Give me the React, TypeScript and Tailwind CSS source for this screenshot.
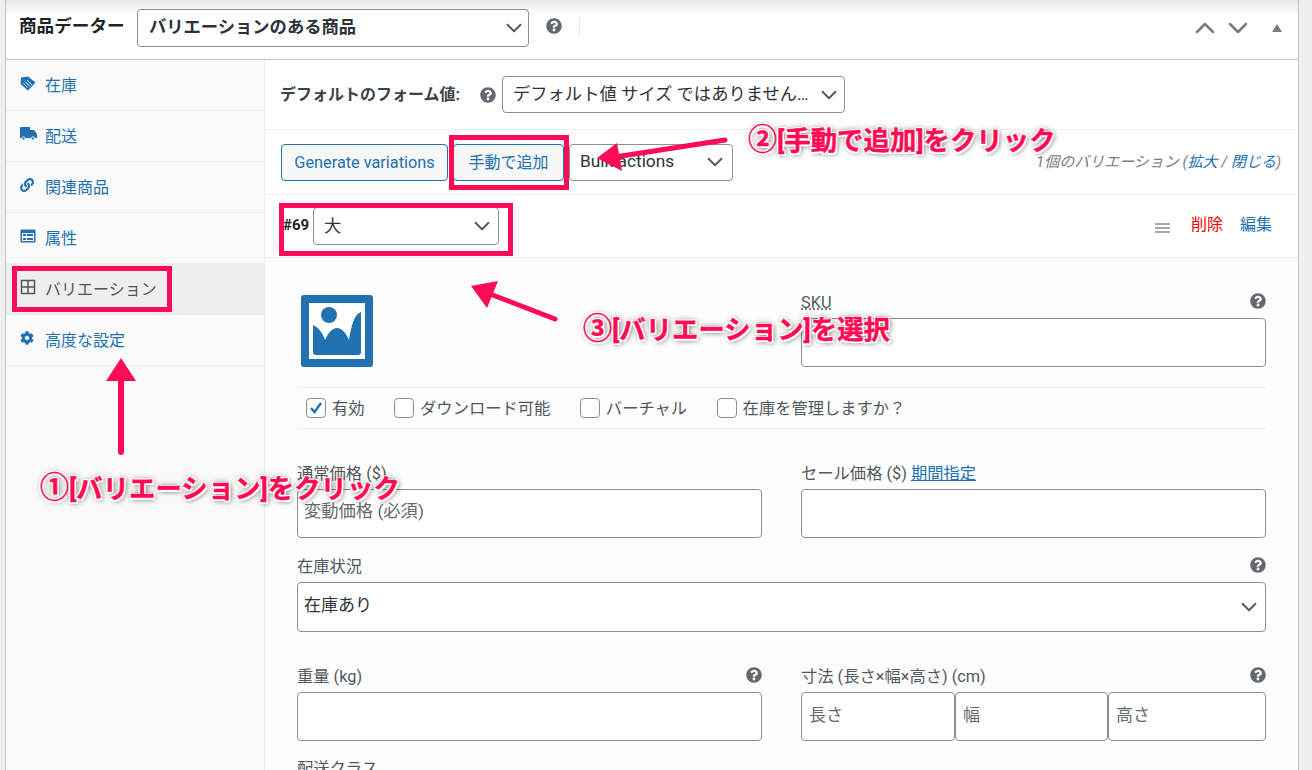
import { FaCog, FaLink, FaQuestionCircle } from "react-icons/fa";
import { LuChevronDown, LuChevronUp } from "react-icons/lu";

const sans = "font-['Roboto','Noto_Sans_CJK_JP',sans-serif]";
const field = "border border-[#8c8f94] rounded-[4px] bg-white";
const redBox = "absolute border-[5px] border-[#ff0a54] pointer-events-none";
const note =
  "absolute whitespace-nowrap font-bold text-[26.4px] leading-[30px] text-[#ff0a54] [-webkit-text-stroke:0.4px_#ff0a54] [text-shadow:-1.5px_-1.5px_0_#fff,1.5px_-1.5px_0_#fff,-1.5px_1.5px_0_#fff,1.5px_1.5px_0_#fff,0_0_6px_#00000088,2px_2px_5px_#00000066]";

function TagIcon() {
  return (
    <svg width="16" height="15" viewBox="0 0 16 15">
      <path d="M8 0.5 15.5 6.5 8 14.5 0.5 8 1 1.5z" fill="#2271b1" />
      <path d="M5 5.5l5 5M7 4l5 5M3.5 7.5l4 4" stroke="#fff" strokeWidth="1" />
    </svg>
  );
}

function TruckIcon() {
  return (
    <svg width="17" height="14" viewBox="0 0 17 14">
      <path d="M0 1a1 1 0 0 1 1-1h9v3h4l3 4v4H0z" fill="#2271b1" />
      <circle cx="3.5" cy="11.5" r="1.6" fill="#2271b1" stroke="#fafafa" />
      <circle cx="13" cy="11.5" r="1.6" fill="#2271b1" stroke="#fafafa" />
    </svg>
  );
}

function AttrIcon() {
  return (
    <svg width="16" height="14" viewBox="0 0 16 14">
      <rect x="0.5" y="0.5" width="15" height="13" rx="1" fill="#2271b1" />
      <rect x="2" y="4" width="12" height="8" fill="#fff" />
      <rect x="3" y="5" width="3" height="2" fill="#2271b1" />
      <rect x="3" y="9" width="3" height="2" fill="#2271b1" />
      <rect x="7" y="5" width="6" height="2" fill="#2271b1" />
      <rect x="7" y="9" width="6" height="2" fill="#2271b1" />
    </svg>
  );
}

function GridIcon() {
  return (
    <svg width="16" height="16" viewBox="0 0 16 16" fill="none" stroke="#50575e" strokeWidth="1.5">
      <rect x="1.5" y="1.5" width="13" height="13" />
      <path d="M8 1.5v13M1.5 8h13" />
    </svg>
  );
}

function SideRow({ icon, label, active }: { icon: React.ReactNode; label: string; active?: boolean }) {
  return (
    <div
      className={`flex items-center h-[51px] border-b border-[#eeeeee] pl-[14px] text-[16px] ${
        active ? "bg-[#eeeeee] text-[#555555]" : "text-[#2271b1]"
      }`}
    >
      <span className="w-[25px] -mt-1 flex shrink-0">{icon}</span>
      <span className="mt-[2px]">{label}</span>
    </div>
  );
}

function Help() {
  return <FaQuestionCircle size={16} className="text-[#646970]" />;
}

function Chevron() {
  return <LuChevronDown size={26} strokeWidth={1.7} className="text-[#50575e] shrink-0" />;
}

function Check({ label, checked }: { label: string; checked?: boolean }) {
  return (
    <div className="flex items-center gap-[6px] text-[16.3px] text-[#50575e]">
      <span className={`${field} w-[20px] h-[20px] flex items-center justify-center`}>
        {checked && (
          <svg width="16" height="16" viewBox="0 0 16 16">
            <path d="M3 8l3.5 4L13 3" fill="none" stroke="#2271b1" strokeWidth="2.4" />
          </svg>
        )}
      </span>
      <span className="mt-[2px]">{label}</span>
    </div>
  );
}

export default function App() {
  return (
    <div className={`${sans} relative w-[1312px] h-[770px] overflow-hidden bg-[#f0f0f1]`}>
      {/* Panel */}
      <div className="ml-[5px] w-[1294px] h-[770px] bg-white border-x border-[#c3c4c7] flex flex-col">
        {/* Header */}
        <div className="h-[60px] shrink-0 border-b border-[#c3c4c7] flex items-start pl-[13px] pr-[14px] pt-[9px] bg-gradient-to-b from-[#e8e8ea] via-white via-[25%] to-white">
          <span className="text-[17.6px] font-bold text-[#1d2327] w-[118px] leading-[34px] whitespace-nowrap">商品データー</span>
          <div className={`${field} w-[392px] h-[38px] flex items-center justify-between pl-[11px] pr-[1px] text-[17.3px] font-bold text-[#2c3338]`}>
            バリエーションのある商品
            <Chevron />
          </div>
          <span className="ml-[17px] mt-[9px]">
            <Help />
          </span>
          <span className="ml-[17px] mt-[9px] w-px h-[18px] bg-[#e2e4e7]" />
          <div className="ml-auto mt-[3px] flex items-center text-[#787c82]">
            <LuChevronUp size={32} strokeWidth={1.9} />
            <LuChevronDown size={32} strokeWidth={1.9} className="ml-[1px]" />
            <span className="ml-[18px] mr-[2px] w-0 h-0 border-x-[5px] border-x-transparent border-b-[8px] border-b-[#787c82]" />
          </div>
        </div>

        <div className="flex-1 flex min-h-0">
          {/* Sidebar */}
          <div className="w-[259px] shrink-0 bg-[#fafafa] border-r border-[#eeeeee]">
            <SideRow icon={<TagIcon />} label="在庫" />
            <SideRow icon={<TruckIcon />} label="配送" />
            <SideRow icon={<FaLink size={14} className="text-[#2271b1]" />} label="関連商品" />
            <SideRow icon={<AttrIcon />} label="属性" />
            <SideRow icon={<GridIcon />} label="バリエーション" active />
            <SideRow icon={<FaCog size={14} className="text-[#2271b1]" />} label="高度な設定" />
          </div>

          {/* Main */}
          <div className="flex-1 min-w-0 bg-[#fdfdfd]">
            <div className="h-[70px] border-b border-[#eeeeee] flex items-center pl-[15px] bg-white">
              <span className="text-[16px] font-bold text-[#3c434a] w-[200px] whitespace-nowrap">デフォルトのフォーム値:</span>
              <Help />
              <div className={`${field} ml-[6px] w-[343px] h-[37px] flex items-center justify-between pl-[10px] pr-[2px] text-[17.3px] text-[#2c3338]`}>
                <span className="whitespace-nowrap">デフォルト値 サイズ ではありません…</span>
                <Chevron />
              </div>
            </div>

            <div className="h-[65px] border-b border-[#eeeeee] flex items-center pl-[16px] pr-[17px] bg-white">
              <div className="h-[37px] w-[167px] pt-[2px] rounded-[4px] border border-[#2271b1] bg-[#f6f7f7] text-[#2271b1] text-[16.3px] flex items-center justify-center">
                Generate variations
              </div>
              <div className="ml-[5px] h-[37px] w-[111px] pt-[2px] rounded-[4px] border border-[#2271b1] bg-[#f6f7f7] text-[#2271b1] text-[16px] flex items-center justify-center">
                手動で追加
              </div>
              <div className={`${field} ml-[5px] w-[164px] h-[37px] flex items-center justify-between pl-[10px] pr-[4px] text-[17.3px] text-[#2c3338]`}>
                Bulk actions
                <Chevron />
              </div>
              <span className="ml-auto text-[15px] italic text-[#787c82] whitespace-nowrap">
                1個のバリエーション (<span className="text-[#2271b1]">拡大</span> / <span className="text-[#2271b1]">閉じる</span>)
              </span>
            </div>

            <div className="h-[63px] border-b border-[#eeeeee] flex items-start pl-[18px] pr-[26px] pt-[12px] bg-white">
              <span className="text-[15px] font-bold text-[#1d2327] w-[30px] mt-[7px]">#69</span>
              <div className={`${field} w-[186px] h-[38px] flex items-center justify-between pl-[10px] pr-[3px] text-[17.3px] text-[#2c3338]`}>
                <span className="mt-[2px]">大</span>
                <Chevron />
              </div>
              <div className="ml-auto flex items-center mt-[6px] text-[16px]">
                <span className="flex flex-col gap-[2px] w-[15px] mt-[6px]">
                  <span className="h-[2px] bg-[#a7aaad]" />
                  <span className="h-[2px] bg-[#a7aaad]" />
                  <span className="h-[2px] bg-[#a7aaad]" />
                </span>
                <span className="ml-[21px] text-[#ff0000]">削除</span>
                <span className="ml-[17px] text-[#2271b1]">編集</span>
              </div>
            </div>

            <div className="pl-[32px] w-[1001px] text-[16.3px] text-[#50575e]">
              <div className="grid grid-cols-2 gap-x-[39px] pt-[37px] h-[129px]">
                <div className="pl-[4px]">
                  <svg width="72" height="72" viewBox="0 0 72 72">
                    <rect width="72" height="72" rx="3" fill="#2271b1" />
                    <rect x="8" y="8" width="56" height="56" fill="#fff" />
                    <circle cx="28" cy="20" r="8" fill="#2271b1" />
                    <path d="M12 30C17 32 22 38 24 45C27 38 31 33 36 33C41 33 45 38 48 45C50 32 53 19 60 17V57a3 3 0 0 1-3 3H15a3 3 0 0 1-3-3Z" fill="#2271b1" />
                  </svg>
                </div>
                <div>
                  <div className="flex justify-between items-start h-[23px]">
                    <span className="mt-[-4px] underline decoration-dotted decoration-[#50575e]">SKU</span>
                    <span className="mt-[-2px]">
                      <Help />
                    </span>
                  </div>
                  <div className={`${field} h-[49px]`} />
                </div>
              </div>

              <div className="h-[42px] border-y border-[#eeeeee] flex items-center pl-[9px] gap-[29.5px]">
                <Check label="有効" checked />
                <Check label="ダウンロード可能" />
                <Check label="バーチャル" />
                <Check label="在庫を管理しますか？" />
              </div>

              <div className="grid grid-cols-2 gap-x-[39px] pt-[33px]">
                <div>
                  <div className="h-[27px] leading-[24px]">通常価格 ($)</div>
                  <div className={`${field} h-[49px] flex items-center pl-[6px] pb-[4px] text-[17.3px] text-[#646970]`}>変動価格 (必須)</div>
                </div>
                <div>
                  <div className="h-[27px] leading-[24px]">
                    セール価格 ($) <span className="text-[#2271b1] underline">期間指定</span>
                  </div>
                  <div className={`${field} h-[49px]`} />
                </div>
              </div>

              <div className="flex justify-between h-[33px] items-end pb-[3px] mt-[11px]">
                <span>在庫状況</span>
                <span className="mb-[6px]">
                  <Help />
                </span>
              </div>
              <div className={`${field} h-[50px] flex items-center justify-between pl-[6px] pr-[3px] pb-[2px] text-[17px] text-[#2c3338]`}>
                在庫あり
                <span className="mt-[2px]">
                  <Chevron />
                </span>
              </div>

              <div className="grid grid-cols-2 gap-x-[39px] pt-[32px]">
                <div>
                  <div className="flex justify-between h-[28px] pt-[1px]">
                    <span>重量 (kg)</span>
                    <span className="mt-[2px]">
                      <Help />
                    </span>
                  </div>
                  <div className={`${field} h-[49px]`} />
                </div>
                <div>
                  <div className="flex justify-between h-[28px] pt-[1px]">
                    <span>寸法 (長さ×幅×高さ) (cm)</span>
                    <span className="mt-[2px]">
                      <Help />
                    </span>
                  </div>
                  <div className="flex h-[49px] text-[17px] text-[#646970]">
                    <div className={`${field} w-[154px] pl-[7px] pt-[10px]`}>長さ</div>
                    <div className={`${field} w-[153px] pl-[7px] pt-[10px]`}>幅</div>
                    <div className={`${field} flex-1 pl-[7px] pt-[10px]`}>高さ</div>
                  </div>
                </div>
              </div>
              <div className="mt-[16px]">配送クラス</div>
            </div>
          </div>
        </div>
      </div>

      {/* Annotations */}
      <div className={`${redBox} left-[12px] top-[266px] w-[160px] h-[46px]`} />
      <div className={`${redBox} left-[449px] top-[135px] w-[120px] h-[55px]`} />
      <div className={`${redBox} left-[279px] top-[203px] w-[234px] h-[53px]`} />

      <svg className="absolute left-0 top-0 pointer-events-none" width="1312" height="770" viewBox="0 0 1312 770">
        <g fill="#ff0a54" stroke="none">
          <path d="M121 452V378" stroke="#ff0a54" strokeWidth="6" strokeLinecap="round" fill="none" />
          <path d="M121 358 136 381 106 381z" />
          <path d="M725 140 615 157" stroke="#ff0a54" strokeWidth="5" strokeLinecap="round" fill="none" />
          <path d="M597 158 617 143 622 171z" />
          <path d="M555 319 490 294" stroke="#ff0a54" strokeWidth="5" strokeLinecap="round" fill="none" />
          <path d="M471 286 498 281 487 308z" />
        </g>
      </svg>
      <div className={`${note} left-[40px] top-[473px]`}>
        <span className="text-[29px]">①</span>[バリエーション]をクリック
      </div>
      <div className={`${note} left-[748px] top-[125px]`}>
        <span className="text-[29px]">②</span>[手動で追加]をクリック
      </div>
      <div className={`${note} left-[583px] top-[314px]`}>
        <span className="text-[29px]">③</span>[バリエーション]を選択
      </div>
    </div>
  );
}
